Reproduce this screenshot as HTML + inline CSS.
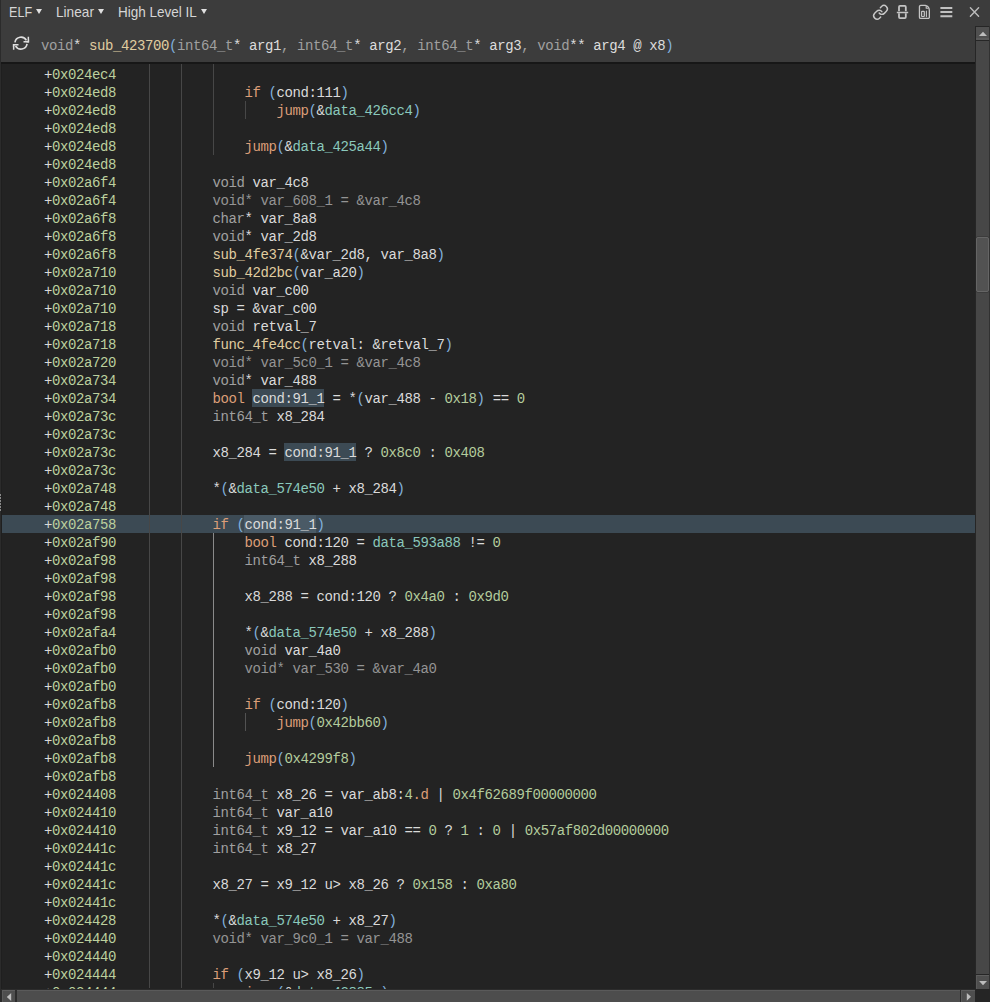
<!DOCTYPE html>
<html><head><meta charset="utf-8">
<style>
html,body{margin:0;padding:0;}
body{width:990px;height:1002px;position:relative;overflow:hidden;background:#232323;font-family:"Liberation Sans",sans-serif;}
#lb{position:absolute;left:0;top:0;width:1px;height:1002px;background:#2b2b2b;z-index:5}
#lb2{position:absolute;left:1px;top:64px;width:1px;height:925px;background:#1f1f1f;z-index:5}
#top{position:absolute;left:0;top:0;width:990px;height:62px;background:#3c3c3c;}
#hline{position:absolute;left:0;top:62px;width:975px;height:2px;background:#171717;}
.ui{position:absolute;top:1.5px;font-size:15px;transform-origin:0 0;color:#d6d6d6;line-height:20px;white-space:nowrap}
.tri{position:absolute;top:9px;width:0;height:0;border-left:3px solid transparent;border-right:3px solid transparent;border-top:5px solid #e0e0e0}
.mono{font-family:"Liberation Mono",monospace;font-size:14px;letter-spacing:-0.4px;}
#sig{position:absolute;left:41px;top:37px;line-height:18px;color:#dcdcdc;white-space:pre}
.row{position:absolute;left:2px;width:974px;height:18px;}
.row.sel{background:#3c4a54}
.ad{position:absolute;left:42px;top:1px;line-height:18px;color:#bcd09e;white-space:pre;font-family:"Liberation Mono",monospace;font-size:14px;letter-spacing:-0.4px;}
.pl{color:#dadada}
.cd{position:absolute;top:1px;line-height:18px;color:#dadada;white-space:pre;font-family:"Liberation Mono",monospace;font-size:14px;letter-spacing:-0.4px;}
.cd .k{color:#dc9e78}
.cd .t{color:#a0a0a0}
.cd .f{color:#e0cda0}
.cd .d{color:#8ac8bb}
.cd .n{color:#b3cc9d}
.cd .o{color:#82b0dc}
.cd .v{color:#dadada}
.cd .g{color:#949494}
.hl{position:absolute;height:18px;background:#3c4a54}
.hl2{position:absolute;height:18px;background:#4a5a66}
.gl{position:absolute;width:1px;background:#474747}
.gla{position:absolute;width:1px;background:#8a8a8a}
.glb{position:absolute;width:1px;background:#525252}
#vs{position:absolute;left:975px;top:26px;width:15px;height:963px;background:#262626;box-shadow:inset -1px 0 0 #313131}
#vtrack{position:absolute;left:976px;top:41px;width:13px;height:933px;background:#474747}
#vup{position:absolute;left:976px;top:27px;width:13px;height:13px;background:#505050;box-sizing:border-box;border-bottom:2px solid #5a5a5a}
#vdn{position:absolute;left:976px;top:975px;width:13px;height:14px;background:#4e4e4e;box-sizing:border-box;border-top:1px solid #5e5e5e;border-left:1px solid #5a5a5a}
#vthumb{position:absolute;left:976px;top:237px;width:13px;height:55px;background:#525252;box-sizing:border-box;border:1px solid #656565;border-radius:2px;box-shadow:0 -1px 0 #3c3c3c,0 1px 0 #3c3c3c}
#hs{position:absolute;left:0;top:989px;width:975px;height:13px;background:#2c2c2c}
#htrack{position:absolute;left:17px;top:990px;width:943px;height:12px;background:#4d4d4d;box-sizing:border-box;border-top:1px solid #5a5a5a}
#hl,#hr{position:absolute;top:990px;height:12px;background:#4e4e4e;box-sizing:border-box;border-top:1px solid #5e5e5e;border-left:1px solid #5a5a5a}
#hl{left:2px;width:13px} #hr{left:961px;width:14px}
#corner{position:absolute;left:975px;top:989px;width:15px;height:13px;background:#252525}
svg{position:absolute}
</style></head><body>
<div id="top"></div>
<div class="ui" style="left:9px;transform:scaleX(0.84)">ELF</div><div class="tri" style="left:35.5px"></div>
<div class="ui" style="left:56px;transform:scaleX(0.91)">Linear</div><div class="tri" style="left:98px"></div>
<div class="ui" style="left:117.5px;transform:scaleX(0.9)">High Level IL</div><div class="tri" style="left:201px"></div>
<!-- icons -->
<svg style="left:0;top:0" width="990" height="62" viewBox="0 0 990 62">
<g fill="none" stroke="#cacaca" stroke-linecap="round" stroke-linejoin="round">
<g transform="translate(872.3 4.1) scale(0.685)" stroke-width="2.1" stroke="#c8c8c8"><path d="M10 13a5 5 0 0 0 7.54.54l3-3a5 5 0 0 0-7.07-7.07l-1.72 1.71"/><path d="M14 11a5 5 0 0 0-7.54-.54l-3 3a5 5 0 0 0 7.07 7.07l1.71-1.71"/></g>
<g stroke="#c4c4c4">
<path stroke-width="1.8" stroke-linecap="butt" d="M899 11.2 V6.9 a1 1 0 0 1 1 -1 H904.8 a1 1 0 0 1 1 1 V11.2"/>
<path stroke-width="1.5" stroke-linecap="butt" d="M896.8 12.5 H908.2"/>
<path stroke-width="1.8" stroke-linecap="butt" d="M899 13.2 V17.1 a1 1 0 0 0 1 1 H904.8 a1 1 0 0 0 1 -1 V13.2"/>
<path stroke-width="1.3" d="M920.75 5.45 H925.3 Q929.35 6.5 929.35 10.5 V17.15 a1.2 1.2 0 0 1 -1.2 1.2 H920.65 a1.2 1.2 0 0 1 -1.2 -1.2 V6.75 a1.3 1.3 0 0 1 1.3 -1.3 Z"/>
<path stroke-width="1.1" d="M926.2 6.4 V8.3 H928.1"/>
<rect stroke-width="1.2" x="921.6" y="11.3" width="2.7" height="5.2" rx="0.5"/>
<path stroke-width="1.1" d="M926.4 11.1 V16.6"/>
</g>
<path stroke-width="2" stroke-linecap="butt" stroke="#c2c2c2" d="M940.4 8 H952.3 M940.4 12.1 H952.3 M940.4 16.2 H952.3"/>
<path stroke-width="1.4" stroke="#bcbcbc" d="M970.4 7.8 L978.6 16.2 M978.6 7.8 L970.4 16.2"/>
</g>
<g fill="none" stroke="#dedede" stroke-width="1.6">
<path d="M14.95 42.3 A6.1 6.1 0 0 1 26.4 40.4"/>
<path d="M27.05 43.9 A6.1 6.1 0 0 1 15.6 45.8"/>
</g>
<g fill="#dedede"><path d="M29.1 36.8 V42.4 H23.5 V40.9 H27.6 V36.8 Z"/><path d="M29.1 39.6 V42.4 H26.3 Z"/><path d="M12.9 44.1 H18.5 V45.6 H14.4 V49.7 H12.9 Z"/><path d="M12.9 44.1 H15.7 L12.9 46.9 Z"/></g>
</svg>
<div id="sig" class="mono"><span style="color:#a0a0a0">void</span>* <span style="color:#e0cda0">sub_423700</span><span style="color:#82b0dc">(</span><span style="color:#a0a0a0">int64_t</span>* arg1<span style="color:#a0a0a0">, </span><span style="color:#a0a0a0">int64_t</span>* arg2<span style="color:#a0a0a0">, </span><span style="color:#a0a0a0">int64_t</span>* arg3<span style="color:#a0a0a0">, </span><span style="color:#a0a0a0">void</span>** arg4 @ x8<span style="color:#82b0dc">)</span></div>
<div id="hline"></div>
<div class="row" style="top:65px"><span class="ad"><span class="pl">+</span>0x024ec4</span></div>
<div class="row" style="top:83px"><span class="ad"><span class="pl">+</span>0x024ed8</span><span class="cd" style="left:242.5px"><span class="k">if</span><span class="v"> </span><span class="o">(</span><span class="v">cond:111</span><span class="o">)</span></span></div>
<div class="row" style="top:101px"><span class="ad"><span class="pl">+</span>0x024ed8</span><span class="cd" style="left:274.5px"><span class="k">jump</span><span class="o">(</span><span class="v">&amp;</span><span class="d">data_426cc4</span><span class="o">)</span></span></div>
<div class="row" style="top:119px"><span class="ad"><span class="pl">+</span>0x024ed8</span></div>
<div class="row" style="top:137px"><span class="ad"><span class="pl">+</span>0x024ed8</span><span class="cd" style="left:242.5px"><span class="k">jump</span><span class="o">(</span><span class="v">&amp;</span><span class="d">data_425a44</span><span class="o">)</span></span></div>
<div class="row" style="top:155px"><span class="ad"><span class="pl">+</span>0x024ed8</span></div>
<div class="row" style="top:173px"><span class="ad"><span class="pl">+</span>0x02a6f4</span><span class="cd" style="left:210.5px"><span class="t">void</span><span class="v"> var_4c8</span></span></div>
<div class="row" style="top:191px"><span class="ad"><span class="pl">+</span>0x02a6f4</span><span class="cd" style="left:210.5px"><span class="g">void* var_608_1 = &amp;var_4c8</span></span></div>
<div class="row" style="top:209px"><span class="ad"><span class="pl">+</span>0x02a6f8</span><span class="cd" style="left:210.5px"><span class="t">char</span><span class="v">* var_8a8</span></span></div>
<div class="row" style="top:227px"><span class="ad"><span class="pl">+</span>0x02a6f8</span><span class="cd" style="left:210.5px"><span class="t">void</span><span class="v">* var_2d8</span></span></div>
<div class="row" style="top:245px"><span class="ad"><span class="pl">+</span>0x02a6f8</span><span class="cd" style="left:210.5px"><span class="f">sub_4fe374</span><span class="o">(</span><span class="v">&amp;var_2d8, var_8a8</span><span class="o">)</span></span></div>
<div class="row" style="top:263px"><span class="ad"><span class="pl">+</span>0x02a710</span><span class="cd" style="left:210.5px"><span class="f">sub_42d2bc</span><span class="o">(</span><span class="v">var_a20</span><span class="o">)</span></span></div>
<div class="row" style="top:281px"><span class="ad"><span class="pl">+</span>0x02a710</span><span class="cd" style="left:210.5px"><span class="t">void</span><span class="v"> var_c00</span></span></div>
<div class="row" style="top:299px"><span class="ad"><span class="pl">+</span>0x02a710</span><span class="cd" style="left:210.5px"><span class="v">sp = &amp;var_c00</span></span></div>
<div class="row" style="top:317px"><span class="ad"><span class="pl">+</span>0x02a718</span><span class="cd" style="left:210.5px"><span class="t">void</span><span class="v"> retval_7</span></span></div>
<div class="row" style="top:335px"><span class="ad"><span class="pl">+</span>0x02a718</span><span class="cd" style="left:210.5px"><span class="f">func_4fe4cc</span><span class="o">(</span><span class="v">retval: &amp;retval_7</span><span class="o">)</span></span></div>
<div class="row" style="top:353px"><span class="ad"><span class="pl">+</span>0x02a720</span><span class="cd" style="left:210.5px"><span class="g">void* var_5c0_1 = &amp;var_4c8</span></span></div>
<div class="row" style="top:371px"><span class="ad"><span class="pl">+</span>0x02a734</span><span class="cd" style="left:210.5px"><span class="t">void</span><span class="v">* var_488</span></span></div>
<div class="row" style="top:389px"><span class="ad"><span class="pl">+</span>0x02a734</span><div class="hl" style="left:250px;top:0;width:72px"></div><span class="cd" style="left:210.5px"><span class="k">bool</span><span class="v"> </span><span class="v">cond:91_1</span><span class="v"> = *</span><span class="o">(</span><span class="v">var_488 - </span><span class="n">0x18</span><span class="o">)</span><span class="v"> == </span><span class="n">0</span></span></div>
<div class="row" style="top:407px"><span class="ad"><span class="pl">+</span>0x02a73c</span><span class="cd" style="left:210.5px"><span class="t">int64_t</span><span class="v"> x8_284</span></span></div>
<div class="row" style="top:425px"><span class="ad"><span class="pl">+</span>0x02a73c</span></div>
<div class="row" style="top:443px"><span class="ad"><span class="pl">+</span>0x02a73c</span><div class="hl" style="left:282px;top:0;width:72px"></div><span class="cd" style="left:210.5px"><span class="v">x8_284 = </span><span class="v">cond:91_1</span><span class="v"> ? </span><span class="n">0x8c0</span><span class="v"> : </span><span class="n">0x408</span></span></div>
<div class="row" style="top:461px"><span class="ad"><span class="pl">+</span>0x02a73c</span></div>
<div class="row" style="top:479px"><span class="ad"><span class="pl">+</span>0x02a748</span><span class="cd" style="left:210.5px"><span class="v">*</span><span class="o">(</span><span class="v">&amp;</span><span class="d">data_574e50</span><span class="v"> + x8_284</span><span class="o">)</span></span></div>
<div class="row" style="top:497px"><span class="ad"><span class="pl">+</span>0x02a748</span></div>
<div class="row sel" style="top:515px"><span class="ad"><span class="pl">+</span>0x02a758</span><div class="hl2" style="left:242px;top:0;width:72px"></div><span class="cd" style="left:210.5px"><span class="k">if</span><span class="v"> </span><span class="o">(</span><span class="v">cond:91_1</span><span class="o">)</span></span></div>
<div class="row" style="top:533px"><span class="ad"><span class="pl">+</span>0x02af90</span><span class="cd" style="left:242.5px"><span class="k">bool</span><span class="v"> cond:120 = </span><span class="d">data_593a88</span><span class="v"> != </span><span class="n">0</span></span></div>
<div class="row" style="top:551px"><span class="ad"><span class="pl">+</span>0x02af98</span><span class="cd" style="left:242.5px"><span class="t">int64_t</span><span class="v"> x8_288</span></span></div>
<div class="row" style="top:569px"><span class="ad"><span class="pl">+</span>0x02af98</span></div>
<div class="row" style="top:587px"><span class="ad"><span class="pl">+</span>0x02af98</span><span class="cd" style="left:242.5px"><span class="v">x8_288 = cond:120 ? </span><span class="n">0x4a0</span><span class="v"> : </span><span class="n">0x9d0</span></span></div>
<div class="row" style="top:605px"><span class="ad"><span class="pl">+</span>0x02af98</span></div>
<div class="row" style="top:623px"><span class="ad"><span class="pl">+</span>0x02afa4</span><span class="cd" style="left:242.5px"><span class="v">*</span><span class="o">(</span><span class="v">&amp;</span><span class="d">data_574e50</span><span class="v"> + x8_288</span><span class="o">)</span></span></div>
<div class="row" style="top:641px"><span class="ad"><span class="pl">+</span>0x02afb0</span><span class="cd" style="left:242.5px"><span class="t">void</span><span class="v"> var_4a0</span></span></div>
<div class="row" style="top:659px"><span class="ad"><span class="pl">+</span>0x02afb0</span><span class="cd" style="left:242.5px"><span class="g">void* var_530 = &amp;var_4a0</span></span></div>
<div class="row" style="top:677px"><span class="ad"><span class="pl">+</span>0x02afb0</span></div>
<div class="row" style="top:695px"><span class="ad"><span class="pl">+</span>0x02afb8</span><span class="cd" style="left:242.5px"><span class="k">if</span><span class="v"> </span><span class="o">(</span><span class="v">cond:120</span><span class="o">)</span></span></div>
<div class="row" style="top:713px"><span class="ad"><span class="pl">+</span>0x02afb8</span><span class="cd" style="left:274.5px"><span class="k">jump</span><span class="o">(</span><span class="n">0x42bb60</span><span class="o">)</span></span></div>
<div class="row" style="top:731px"><span class="ad"><span class="pl">+</span>0x02afb8</span></div>
<div class="row" style="top:749px"><span class="ad"><span class="pl">+</span>0x02afb8</span><span class="cd" style="left:242.5px"><span class="k">jump</span><span class="o">(</span><span class="n">0x4299f8</span><span class="o">)</span></span></div>
<div class="row" style="top:767px"><span class="ad"><span class="pl">+</span>0x02afb8</span></div>
<div class="row" style="top:785px"><span class="ad"><span class="pl">+</span>0x024408</span><span class="cd" style="left:210.5px"><span class="t">int64_t</span><span class="v"> x8_26 = var_ab8:</span><span class="n">4</span><span class="k">.d</span><span class="v"> | </span><span class="n">0x4f62689f00000000</span></span></div>
<div class="row" style="top:803px"><span class="ad"><span class="pl">+</span>0x024410</span><span class="cd" style="left:210.5px"><span class="t">int64_t</span><span class="v"> var_a10</span></span></div>
<div class="row" style="top:821px"><span class="ad"><span class="pl">+</span>0x024410</span><span class="cd" style="left:210.5px"><span class="t">int64_t</span><span class="v"> x9_12 = var_a10 == </span><span class="n">0</span><span class="v"> ? </span><span class="n">1</span><span class="v"> : </span><span class="n">0</span><span class="v"> | </span><span class="n">0x57af802d00000000</span></span></div>
<div class="row" style="top:839px"><span class="ad"><span class="pl">+</span>0x02441c</span><span class="cd" style="left:210.5px"><span class="t">int64_t</span><span class="v"> x8_27</span></span></div>
<div class="row" style="top:857px"><span class="ad"><span class="pl">+</span>0x02441c</span></div>
<div class="row" style="top:875px"><span class="ad"><span class="pl">+</span>0x02441c</span><span class="cd" style="left:210.5px"><span class="v">x8_27 = x9_12 u&gt; x8_26 ? </span><span class="n">0x158</span><span class="v"> : </span><span class="n">0xa80</span></span></div>
<div class="row" style="top:893px"><span class="ad"><span class="pl">+</span>0x02441c</span></div>
<div class="row" style="top:911px"><span class="ad"><span class="pl">+</span>0x024428</span><span class="cd" style="left:210.5px"><span class="v">*</span><span class="o">(</span><span class="v">&amp;</span><span class="d">data_574e50</span><span class="v"> + x8_27</span><span class="o">)</span></span></div>
<div class="row" style="top:929px"><span class="ad"><span class="pl">+</span>0x024440</span><span class="cd" style="left:210.5px"><span class="g">void* var_9c0_1 = var_488</span></span></div>
<div class="row" style="top:947px"><span class="ad"><span class="pl">+</span>0x024440</span></div>
<div class="row" style="top:965px"><span class="ad"><span class="pl">+</span>0x024444</span><span class="cd" style="left:210.5px"><span class="k">if</span><span class="v"> </span><span class="o">(</span><span class="v">x9_12 u&gt; x8_26</span><span class="o">)</span></span></div>
<div class="row" style="top:983px"><span class="ad"><span class="pl">+</span>0x024444</span><span class="cd" style="left:242.5px"><span class="k">jump</span><span class="o">(</span><span class="v">&amp;</span><span class="d">data_42885c</span><span class="o">)</span></span></div>

<div class="gl" style="left:149px;top:64px;height:924px"></div>
<div class="gl" style="left:181px;top:64px;height:924px"></div>
<div class="gl" style="left:213px;top:64px;height:91px"></div>
<div class="gl" style="left:245px;top:101px;height:18px"></div>
<div class="gla" style="left:213px;top:533px;height:234px"></div>
<div class="glb" style="left:245px;top:713px;height:18px"></div>
<div class="gl" style="left:213px;top:983px;height:5px"></div>

<div id="lb"></div><div id="lb2"></div><div style="position:absolute;left:0;top:494px;width:1px;height:2px;background:#8a8a8a;z-index:6"></div><div style="position:absolute;left:0;top:497px;width:1px;height:2px;background:#8a8a8a;z-index:6"></div><div style="position:absolute;left:0;top:500px;width:1px;height:2px;background:#8a8a8a;z-index:6"></div><div style="position:absolute;left:0;top:503px;width:1px;height:2px;background:#8a8a8a;z-index:6"></div><div style="position:absolute;left:0;top:506px;width:1px;height:2px;background:#8a8a8a;z-index:6"></div><div style="position:absolute;left:0;top:509px;width:1px;height:2px;background:#8a8a8a;z-index:6"></div>
<div id="vs"></div><div id="vtrack"></div><div id="vup"></div><div id="vdn"></div><div id="vthumb"></div>
<div id="hs"></div><div id="htrack"></div><div id="hl"></div><div id="hr"></div><div id="corner"></div>
<svg style="left:0;top:0" width="990" height="1002" viewBox="0 0 990 1002"><g fill="#bdbdbd"><path d="M978.9 36 L983 31.7 L987 36 Z"/><path d="M979.1 981 L987 981 L983 985.3 Z"/><path d="M11.2 993 L11.2 1001 L6.8 997 Z"/><path d="M966.8 993 L966.8 1000.7 L971 996.8 Z"/></g></svg>
</body></html>
